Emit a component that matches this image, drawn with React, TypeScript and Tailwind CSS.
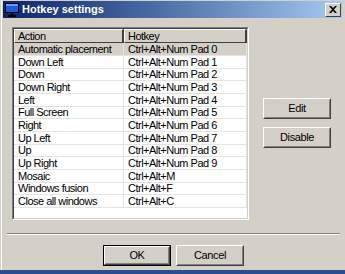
import React from "react";

const rows: [string, string][] = [
  ["Automatic placement", "Ctrl+Alt+Num Pad 0"],
  ["Down Left", "Ctrl+Alt+Num Pad 1"],
  ["Down", "Ctrl+Alt+Num Pad 2"],
  ["Down Right", "Ctrl+Alt+Num Pad 3"],
  ["Left", "Ctrl+Alt+Num Pad 4"],
  ["Full Screen", "Ctrl+Alt+Num Pad 5"],
  ["Right", "Ctrl+Alt+Num Pad 6"],
  ["Up Left", "Ctrl+Alt+Num Pad 7"],
  ["Up", "Ctrl+Alt+Num Pad 8"],
  ["Up Right", "Ctrl+Alt+Num Pad 9"],
  ["Mosaic", "Ctrl+Alt+M"],
  ["Windows fusion", "Ctrl+Alt+F"],
  ["Close all windows", "Ctrl+Alt+C"],
];

function Button({ label, isDefault }: { label: string; isDefault?: boolean }) {
  return (
    <div
      className={
        isDefault
          ? "border border-black w-[68px] h-[21px]"
          : "w-[68px] h-[21px]"
      }
    >
      <div className="h-full border border-t-white border-l-white border-r-[#404040] border-b-[#404040]">
        <div className="h-full flex items-center justify-center border border-t-[#d4d0c8] border-l-[#d4d0c8] border-r-[#808080] border-b-[#808080] text-[11px] tracking-[-0.4px] text-black">
          {label}
        </div>
      </div>
    </div>
  );
}

function MonitorIcon() {
  return (
    <svg width="16" height="16" viewBox="0 0 16 16">
      <rect x="1" y="1" width="14" height="10" fill="#000" />
      <rect x="2" y="2" width="12" height="8" fill="#1a5de0" />
      <rect x="2" y="2" width="12" height="2" fill="#5f9cf5" />
      <rect x="7" y="11" width="2" height="2" fill="#000" />
      <rect x="4" y="13" width="8" height="2" fill="#000" />
    </svg>
  );
}

export default function App() {
  return (
    <div
      className="w-[345px] h-[274px] bg-[#d4d0c8] overflow-hidden flex flex-col"
      style={{ fontFamily: '"Liberation Sans", Arial, sans-serif' }}
    >
      <div className="flex-1 flex flex-col border-l border-l-white ml-[1px] pt-[1px] pr-[3px]">
        {/* title bar */}
        <div className="ml-[1px] h-[17px] flex items-center bg-gradient-to-r from-[#0a246a] to-[#a6caf0]">
          <div className="ml-[1px]">
            <MonitorIcon />
          </div>
          <span className="ml-[2px] text-[11px] font-bold text-white leading-none">
            Hotkey settings
          </span>
          <div className="ml-auto mr-[1px] w-[16px] h-[14px] border border-t-white border-l-white border-r-[#404040] border-b-[#404040] bg-[#d4d0c8] flex items-center justify-center">
            <svg width="8" height="7" viewBox="0 0 8 7">
              <path d="M0 0h2l2 2 2-2h2L5 3.5 8 7H6L4 5 2 7H0l3-3.5z" fill="#000" />
            </svg>
          </div>
        </div>

        {/* body */}
        <div className="flex mt-[9px] ml-[10px]">
          <div className="w-[237px] h-[193px] border border-t-[#808080] border-l-[#808080] border-r-white border-b-white">
            <div className="h-full border border-t-[#404040] border-l-[#404040] border-r-[#d4d0c8] border-b-[#d4d0c8] bg-white text-[11px] tracking-[-0.5px] text-black">
              <div className="flex h-[14px]">
                <div className="w-[110px] border border-t-white border-l-white border-r-[#404040] border-b-[#404040] bg-[#d4d0c8] px-[3px] leading-[12px] border-r-[2px]">
                  Action
                </div>
                <div className="w-[123px] border border-t-white border-l-white border-r-[#404040] border-b-[#404040] bg-[#d4d0c8] px-[3px] leading-[12px] border-r-[2px]">
                  Hotkey
                </div>
              </div>
              {rows.map(([a, k], i) => (
                <div
                  key={a}
                  className={
                    (i % 3 === 2 ? "h-[12px] " : "h-[13px] ") +
                    (i === 0 ? "bg-[#d4d0c8] " : "") +
                    "flex border-b border-b-[#e6e4df]"
                  }
                >
                  <div className="w-[110px] pl-[4px] flex items-center border-r border-r-[#e6e4df] whitespace-nowrap">
                    {a}
                  </div>
                  <div className="w-[123px] pl-[4px] flex items-center border-r border-r-[#e6e4df] whitespace-nowrap">
                    {k}
                  </div>
                </div>
              ))}
            </div>
          </div>
          <div className="ml-[14px] mt-[71px] flex flex-col gap-[8px]">
            <Button label="Edit" />
            <Button label="Disable" />
          </div>
        </div>

        {/* separator */}
        <div className="ml-[5px] mr-[2px] mt-[13px] h-[2px] border-t border-t-[#808080] border-b border-b-white" />

        {/* bottom buttons */}
        <div className="flex gap-[5px] ml-[101px] mt-[10px]">
          <Button label="OK" isDefault />
          <Button label="Cancel" />
        </div>
      </div>
      <div className="h-[4px] bg-[#2b4f8e]" />
    </div>
  );
}
